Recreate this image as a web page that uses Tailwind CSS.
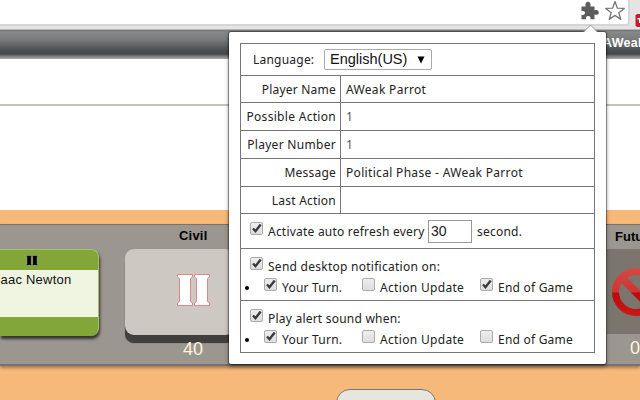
<!DOCTYPE html>
<html lang="en">
<head>
<meta charset="utf-8">
<title>Game status</title>
<script src="https://cdn.jsdelivr.net/npm/@tailwindcss/browser@4"></script>
</head>
<body class="w-[640px] h-[400px] overflow-hidden bg-white">
<main class="relative flex flex-col w-[640px] h-[400px] overflow-hidden bg-white font-['Liberation_Sans',sans-serif]">
  <!-- browser toolbar -->
  <header class="relative h-[30px] shrink-0 bg-[#e4e4e4] border-b border-[#b4b4b4]">
    <div class="flex h-[26px] w-[630px] items-start justify-end rounded-br-[4px] border-r-2 border-b-2 border-[#d6d6d6] bg-white">
      <svg class="mt-[1px] mr-[6px] w-[19px] h-[19px]" viewBox="0 0 19 19"><path fill="#5c5c5c" d="M1.500 5.500H5.700C4.800 3 6 .8 8 .8S11.200 3 10.300 5.500H14.500V9.300C17 8.300 18.800 9.400 18.800 11.400S17 14.400 14.500 13.500V18.300H10.400C11 16.200 10 14.900 8.200 14.900S5.400 16.200 6 18.300H1.500V13.700C4 14.300 5 13.300 5 11.800S3.700 9.400 1.500 10.200Z"/></svg>
      <svg class="w-[20px] h-[21px] mr-[3px]" viewBox="0 0 20 21"><path fill="#fff" stroke="#777" stroke-width="1.300" stroke-linejoin="round" d="M10 1.500L12.400 8.200L19.300 8.400L13.800 12.700L15.800 19.400L10 15.400L4.200 19.400L6.200 12.700L.7 8.400L7.600 8.200Z"/></svg>
    </div>
    <svg class="absolute left-[635px] top-[14px] w-[5px] h-[13px]" viewBox="0 0 5 13"><path fill="#c51c2b" d="M2 0H5V13H2L.5 11.500V1.500Z"/><path fill="#fff" d="M2.500 4H5V9H4V5.500H2.500Z"/></svg>
  </header>
  <!-- site navigation -->
  <nav class="flex h-[29px] shrink-0 items-center justify-end bg-[linear-gradient(#777_0px,#868789_2px,#7b7c7e_9px,#4b4c4e_21px,#454648_24px,#777_26px,#aaa_29px)]">
    <span class="w-[37px] overflow-hidden whitespace-nowrap text-[12.5px] leading-[14px] tracking-[.3px] font-bold text-white -mt-[3px]">AWeak</span>
  </nav>
  <section class="h-[45px] shrink-0"></section>
  <section class="h-[106px] shrink-0 border-t-2 border-[#c3c3b7]"></section>
  <!-- game board -->
  <section class="h-[190px] shrink-0 bg-[#f7b979] pt-[14px]">
    <div class="relative flex h-[142px] border-t border-b-2 border-t-[#77726c] border-b-[#77726b] bg-[#9c9690] shadow-[0_2px_3px_#0005]">
      <article class="mt-[24px] h-[87px] w-[99px] flex flex-col shrink-0 overflow-visible rounded-r-[8px] bg-[#83a638] shadow-[1px_3px_3px_#333] border-t border-r border-[#a4c169]">
        <div class="h-[20px] pt-[5px] pl-[26px]"><svg class="w-[12px] h-[11px]" viewBox="0 0 12 11"><path stroke="#d7d4bc" stroke-width=".4" d="M.3.500H5.800V1.700H5.300V9H5.800V10.300H.3V9H.9V1.700H.3ZM6.200.500H11.700V1.700H11.100V9H11.700V10.300H6.200V9H6.700V1.700H6.200Z"/></svg></div>
        <div class="h-[47px] bg-[#eff4e1] overflow-hidden whitespace-nowrap text-[13px] leading-[20px] tracking-[.22px] text-[#111]"><span class="-ml-[10px]">Isaac Newton</span></div>
      </article>
      <article class="ml-[26px] w-[110px] flex flex-col shrink-0 items-center">
        <h2 class="w-full pl-[54px] h-[24px] pt-[3px] text-[13px] leading-[15px] tracking-[.2px] font-bold text-black">Civil</h2>
        <div class="h-[86px] w-full rounded-[9px] bg-[#cec8c2] shadow-[0_8px_0_#41403f,0_8px_1px_#333] pl-[51px] pt-[24px]"><svg class="w-[35px] h-[34px]" viewBox="0 0 35 34"><path fill="#fff" stroke="#df8688" stroke-width="1" d="M1.500 1.500H16.500V4L14.500 5.500V28.500L16.500 30V32.500H1.500V30L3.500 28.500V5.500L1.500 4ZM18.500 1.500H33.500V4L31.500 5.500V28.500L33.500 30V32.500H18.500V30L20.500 28.500V5.500L18.500 4Z"/></svg></div>
        <span class="w-full pl-[58px] mt-[4px] text-[18px] leading-[20px] text-[#fff4de]">40</span>
      </article>
      <article class="ml-[372px] w-[33px] shrink-0 overflow-hidden">
        <h2 class="pl-[8px] h-[24px] pt-[4px] text-[13px] leading-[15px] font-bold text-black">Future</h2>
        <div class="h-[85px] bg-[#7b756e] pl-[4px] pt-[18px]"><svg class="w-[50px] h-[50px]" viewBox="0 0 50 50"><defs><linearGradient id="sign" gradientUnits="userSpaceOnUse" x1="0" y1="0" x2="0" y2="50"><stop stop-color="#d64a46"/><stop offset=".5" stop-color="#cf3431"/><stop offset=".52" stop-color="#b70b0e"/><stop offset="1" stop-color="#d01818"/></linearGradient></defs><circle cx="25" cy="25" r="20.500" fill="none" stroke="url(#sign)" stroke-width="7"/><path d="M11 11L39 39" stroke="url(#sign)" stroke-width="8"/></svg></div>
        <span class="block pl-[23px] mt-[4px] text-[18px] leading-[20px] text-[#fff4de]">0</span>
      </article>
    </div>
    <div class="ml-[336px] mt-[23px] w-[100px] h-[30px] rounded-[14px] border border-[#777] bg-[#e6e6df]"></div>
  </section>

  <!-- extension popup -->
  <aside class="absolute left-[229px] top-[32px] w-[377px] h-[332px] rounded-[2px] bg-white pl-[11px] pt-[11px] shadow-[0_0_0_1px_#0005,0_2px_4px_#0008] font-['Noto_Sans',sans-serif] text-[12px] tracking-[.22px] text-[#222]">
    <svg class="absolute left-[354px] -top-[8px] w-[15px] h-[9px]" viewBox="0 0 15 9"><path fill="#fff" d="M0 9L7.500 1L15 9Z"/><path fill="none" stroke="#999" d="M1 7.500L7.500 1L14 7.500"/></svg>
    <div class="flex flex-col w-[355px] h-[310px] border border-[#777] whitespace-nowrap">
      <div class="flex h-[32px] shrink-0 items-center border-b border-[#777] pl-[12px]">
        <span class="w-[71px] pt-[1px]">Language:</span>
        <div class="flex w-[108px] h-[21px] items-center justify-between rounded-[2px] border border-[#aaa] pl-[5px] pr-[6px] font-['Liberation_Sans',sans-serif] text-[14.500px] tracking-normal text-[#111]"><span>English(US)</span><svg class="w-[8px] h-[8px]" viewBox="0 0 8 8"><path d="M.5.500H7.500L4 7.500Z"/></svg></div>
      </div>
      <div class="grid grid-cols-[100px_1fr] grid-rows-[27px_28px_28px_28px_27px] shrink-0 leading-[28px] [&>*]:border-b [&>*]:border-[#777] [&>*:nth-child(odd)]:border-r [&>*:nth-child(odd)]:text-right [&>*:nth-child(odd)]:pr-[4px] [&>*:nth-child(even)]:pl-[5px]">
        <div>Player Name</div><div class="tracking-[.32px]">AWeak Parrot</div>
        <div class="tracking-[.3px]">Possible Action</div><div class="text-[#555]">1</div>
        <div class="tracking-[.3px]">Player Number</div><div class="text-[#555]">1</div>
        <div>Message</div><div class="tracking-[.32px]">Political Phase - AWeak Parrot</div>
        <div>Last Action</div><div></div>
      </div>
      <div class="flex h-[35px] shrink-0 items-center border-b border-[#777] pl-[9px]">
        <svg class="w-[14px] h-[14px] -mt-[4px]"><use href="#on"/></svg><span class="ml-[4px] w-[160px] pt-[2px]">Activate auto refresh every</span>
        <div class="w-[44px] h-[23px] border border-[#999] pl-[2px] font-['Liberation_Sans',sans-serif] text-[14px] leading-[21px] tracking-normal text-[#222]">30</div><span class="ml-[5px] pt-[2px] tracking-[.22px]">second.</span>
      </div>
      <div class="h-[52px] shrink-0 border-b border-[#777] pt-[7px]">
        <div class="flex h-[22px] pl-[9px] leading-[22px]"><svg class="w-[14px] h-[14px] mt-[1px]"><use href="#on"/></svg><span class="ml-[4px] tracking-[.26px]">Send desktop notification on:</span></div>
        <div class="flex h-[22px] pl-[4px] leading-[20px]"><i class="mt-[8px] size-[4px] mr-[1px] rounded-full bg-black"></i><svg class="ml-[14px] w-[14px] h-[14px]"><use href="#on"/></svg><span class="ml-[4px] w-[80px]">Your Turn.</span><svg class="w-[14px] h-[14px]"><use href="#off"/></svg><span class="ml-[4px] w-[100px] tracking-[.32px]">Action Update</span><svg class="w-[14px] h-[14px]"><use href="#on"/></svg><span class="ml-[4px]">End of Game</span></div>
      </div>
      <div class="h-[52px] shrink-0 pt-[7px]">
        <div class="flex h-[22px] pl-[9px] leading-[22px]"><svg class="w-[14px] h-[14px] mt-[1px]"><use href="#on"/></svg><span class="ml-[4px]">Play alert sound when:</span></div>
        <div class="flex h-[22px] pl-[4px] leading-[20px]"><i class="mt-[8px] size-[4px] mr-[1px] rounded-full bg-black"></i><svg class="ml-[14px] w-[14px] h-[14px]"><use href="#on"/></svg><span class="ml-[4px] w-[80px]">Your Turn.</span><svg class="w-[14px] h-[14px]"><use href="#off"/></svg><span class="ml-[4px] w-[100px] tracking-[.32px]">Action Update</span><svg class="w-[14px] h-[14px]"><use href="#off"/></svg><span class="ml-[4px]">End of Game</span></div>
      </div>
    </div>
  </aside>
  <svg class="absolute w-0 h-0"><defs><linearGradient id="box" x2="0" y2="1"><stop stop-color="#eee"/><stop offset="1" stop-color="#ddd"/></linearGradient>
    <g id="off"><rect x=".5" y=".5" width="12" height="12" rx="1.500" fill="url(#box)" stroke="#aaa"/></g>
    <g id="on"><use href="#off"/><path fill="none" stroke="#3a3a3a" stroke-width="2.400" d="M3 6.500L5.500 9.200L10.700 2.500"/></g></defs></svg>
</main>
</body>
</html>
